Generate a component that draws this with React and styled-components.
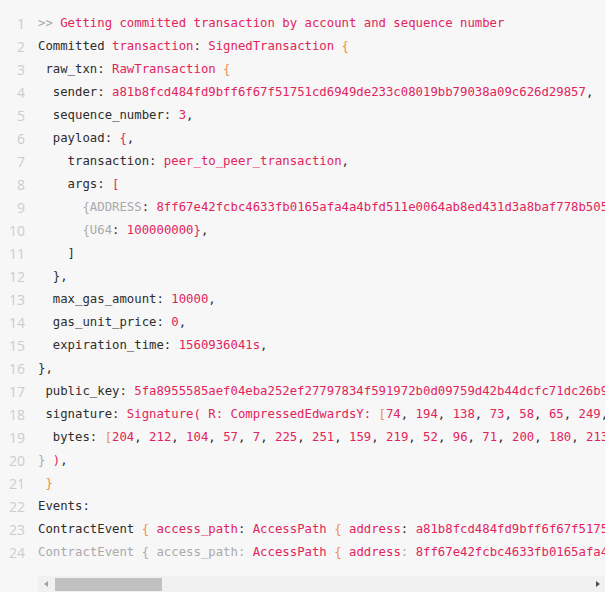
import React from 'react';
import styled, { createGlobalStyle } from 'styled-components';

const GlobalStyle = createGlobalStyle`
  body {
    margin: 0;
    background: #ffffff;
  }
`

const Block = styled.div`
  width: 605px;
  display: flex;
  background: #f7f7f7;
  padding-top: 12px;
`

const Gutter = styled.div`
  width: 38px;
  flex-shrink: 0;
  box-sizing: border-box;
  padding-right: 13px;
  text-align: right;
  font-family: 'Open Sans', 'Noto Sans', sans-serif;
  font-size: 14px;
  line-height: 23px;
  color: #cccccc;
`

const Pane = styled.div`
  flex: 1;
  min-width: 0;
  display: flex;
  flex-direction: column;
`

const Code = styled.pre`
  margin: 0;
  padding-bottom: 12px;
  overflow: hidden;
  font-family: 'DejaVu Sans Mono', 'Liberation Mono', monospace;
  font-size: 12.3px;
  line-height: 23px;
  color: #2d2d2d;
  white-space: pre;
`

const Line = styled.div`
  height: 23px;
  color: ${p => (p.$faded ? '#aaaaaa' : 'inherit')};
`

const Red = styled.span`
  color: #e2245c;
`

const Brace = styled.span`
  color: #f08d49;
`

const Muted = styled.span`
  color: #aaaaaa;
`

const Scrollbar = styled.div`
  height: 16px;
  display: flex;
  align-items: center;
  background: #f1f1f1;
`

const Arrow = styled.div`
  width: 15px;
  height: 16px;
  display: flex;
  align-items: center;
  justify-content: center;

  &::before {
    content: '';
    width: 0;
    height: 0;
    border-top: 3.5px solid transparent;
    border-bottom: 3.5px solid transparent;
    ${p => (p.$right
      ? 'border-left: 4px solid #505050;'
      : 'border-right: 4px solid #a3a3a3;')}
  }
`

const Track = styled.div`
  flex: 1;
  height: 16px;
  display: flex;
  align-items: center;
  padding-left: 2px;
`

const Thumb = styled.div`
  width: 107px;
  height: 13px;
  background: #c1c1c1;
`

const lines = [
  <><Muted>&gt;&gt;</Muted> <Red>Getting committed transaction by account and sequence number</Red></>,
  <>Committed <Red>transaction</Red>: <Red>SignedTransaction</Red> <Brace>{'{'}</Brace></>,
  <> raw_txn: <Red>RawTransaction</Red> <Brace>{'{'}</Brace></>,
  <>  sender: <Red>a81b8fcd484fd9bff6f67f51751cd6949de233c08019bb79038a09c626d29857</Red>,</>,
  <>  sequence_number: <Red>3</Red>,</>,
  <>  payload: <Red>{'{'}</Red>,</>,
  <>    transaction: <Red>peer_to_peer_transaction</Red>,</>,
  <>    args: <Red>[</Red></>,
  <>      <Muted>{'{ADDRESS'}</Muted>: <Red>8ff67e42fcbc4633fb0165afa4a4bfd511e0064ab8ed431d3a8baf778b505ff2{'}'}</Red>,</>,
  <>      <Muted>{'{U64'}</Muted>: <Red>100000000{'}'}</Red>,</>,
  <>    ]</>,
  <>  {'}'},</>,
  <>  max_gas_amount: <Red>10000</Red>,</>,
  <>  gas_unit_price: <Red>0</Red>,</>,
  <>  expiration_time: <Red>1560936041s</Red>,</>,
  <>{'}'},</>,
  <> public_key: <Red>5fa8955585aef04eba252ef27797834f591972b0d09759d42b44dcfc71dc26b9</Red>,</>,
  <> signature: <Red>Signature( R: CompressedEdwardsY: </Red><Brace>[</Brace><Red>74</Red>, <Red>194</Red>, <Red>138</Red>, <Red>73</Red>, <Red>58</Red>, <Red>65</Red>, <Red>249</Red>, <Red>202</Red>, <Red>118</Red>, <Red>37</Red>, <Red>46</Red>, <Red>123</Red>,</>,
  <>  bytes: <Brace>[</Brace><Red>204</Red>, <Red>212</Red>, <Red>104</Red>, <Red>57</Red>, <Red>7</Red>, <Red>225</Red>, <Red>251</Red>, <Red>159</Red>, <Red>219</Red>, <Red>52</Red>, <Red>96</Red>, <Red>71</Red>, <Red>200</Red>, <Red>180</Red>, <Red>213</Red>, <Red>15</Red>,</>,
  <><Muted>{'}'}</Muted> <Red>)</Red>,</>,
  <> <Brace>{'}'}</Brace></>,
  <>Events:</>,
  <>ContractEvent <Brace>{'{'}</Brace> <Red>access_path</Red>: <Red>AccessPath</Red> <Brace>{'{'}</Brace> <Red>address</Red>: <Red>a81b8fcd484fd9bff6f67f51751cd6949de233c08019bb79038a09c626d29857</Red>,</>,
  <>ContractEvent {'{'} access_path: <Red>AccessPath</Red> <Brace>{'{'}</Brace> <Red>address</Red>: <Red>8ff67e42fcbc4633fb0165afa4a4bfd511e0064ab8ed431d3a8baf778b505ff2</Red>,</>,
]

const App = () => {
  return (
    <>
      <GlobalStyle />
      <Block>
        <Gutter>
          {lines.map((_, i) => (
            <div key={i}>{i + 1}</div>
          ))}
        </Gutter>
        <Pane>
          <Code>
            {lines.map((line, i) => (
              <Line key={i} $faded={i === 23}>{line}</Line>
            ))}
          </Code>
          <Scrollbar>
            <Arrow />
            <Track>
              <Thumb />
            </Track>
            <Arrow $right />
          </Scrollbar>
        </Pane>
      </Block>
    </>
  );
}

export default App;
